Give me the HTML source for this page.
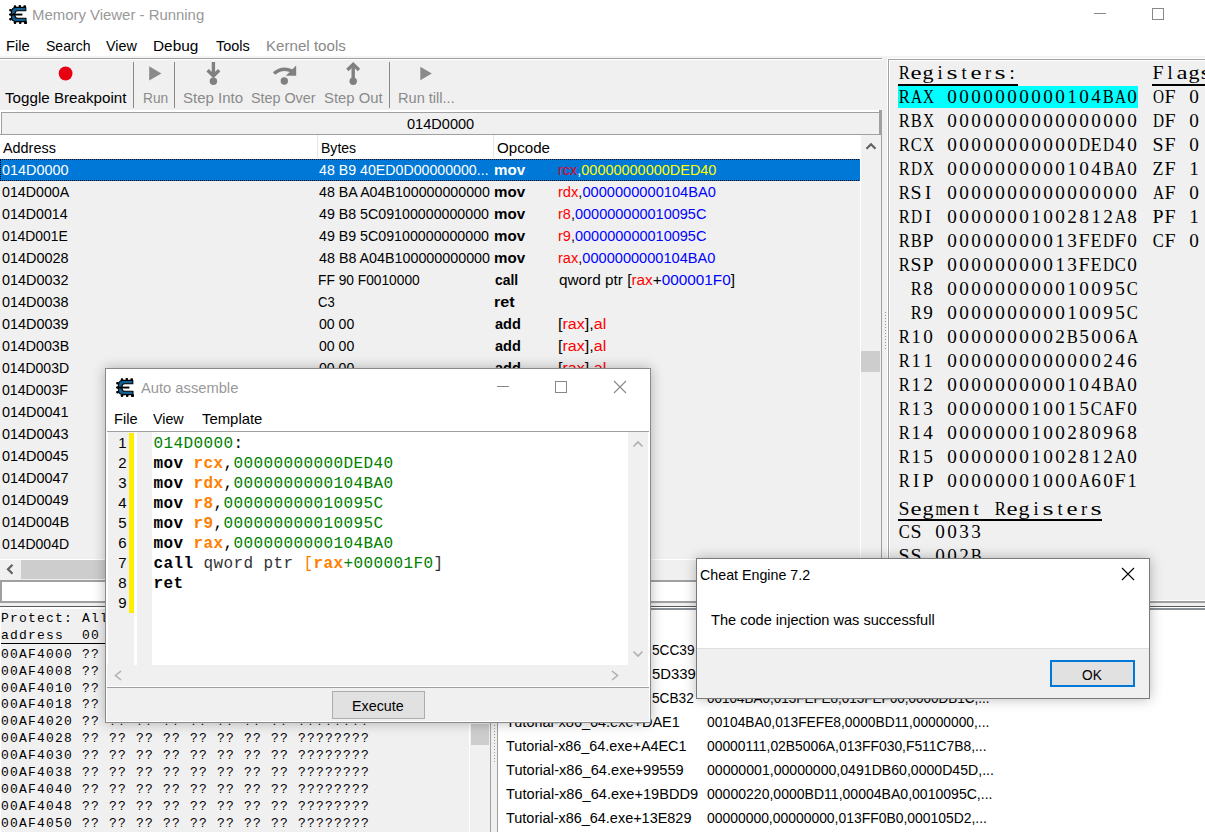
<!DOCTYPE html><html><head><meta charset="utf-8"><style>
html,body{margin:0;padding:0;}
body{width:1205px;height:832px;overflow:hidden;position:relative;background:#fff;}
div{box-sizing:border-box;}
.cl{position:absolute;white-space:nowrap;color:#000;}
.cl i{display:inline-block;text-align:center;font-style:normal;}
</style></head><body>
<svg style="position:absolute;left:8.8px;top:4.8px" width="18" height="19" viewBox="0 0 18 19">
<g fill="#000">
<rect x="4.8" y="0.2" width="2.4" height="2.6" rx="0.8"/><rect x="9.6" y="0" width="2.4" height="2.6" rx="0.8"/><rect x="14.4" y="0.2" width="2.6" height="2.6" rx="0.8"/>
<rect x="4.8" y="16.4" width="2.4" height="2.6" rx="0.8"/><rect x="10" y="16.4" width="2.4" height="2.6" rx="0.8"/><rect x="15" y="16.2" width="3" height="2.8" rx="0.8"/>
<rect x="0.2" y="4" width="2.6" height="2.4" rx="0.8"/><rect x="0" y="8.4" width="2.6" height="2.2" rx="0.8"/><rect x="0.2" y="13" width="2.6" height="2.4" rx="0.8"/>
</g>
<path d="M16.8 2.4 H7.4 Q2.4 2.4 2.4 7.4 V11.8 Q2.4 16.6 7.4 16.6 H17 V13.2 H8.8 Q6 13.2 6 10.4 V8.6 Q6 5.8 8.8 5.8 H16.8 Z" fill="#135f94" stroke="#000" stroke-width="1.1" stroke-linejoin="round"/>
<rect x="1" y="8.6" width="12.4" height="1.9" fill="#000"/>
</svg>
<div style="position:absolute;left:32.41px;top:7.10px;font:normal 15px/15px 'Liberation Sans', sans-serif;color:#999999;white-space:pre;transform:scaleX(0.9948);transform-origin:0 0;">Memory Viewer - Running</div>
<div style="position:absolute;left:1094px;top:13px;width:12px;height:1px;background:#888;"></div>
<div style="position:absolute;left:1152px;top:8px;width:12px;height:12px;background:transparent;border:1px solid #888;"></div>
<div style="position:absolute;left:6.32px;top:38.20px;font:normal 15px/15px 'Liberation Sans', sans-serif;color:#000;white-space:pre;transform:scaleX(0.9826);transform-origin:0 0;">File</div>
<div style="position:absolute;left:45.56px;top:38.20px;font:normal 15px/15px 'Liberation Sans', sans-serif;color:#000;white-space:pre;transform:scaleX(0.9370);transform-origin:0 0;">Search</div>
<div style="position:absolute;left:106.20px;top:38.20px;font:normal 15px/15px 'Liberation Sans', sans-serif;color:#000;white-space:pre;transform:scaleX(0.9576);transform-origin:0 0;">View</div>
<div style="position:absolute;left:153.37px;top:38.20px;font:normal 15px/15px 'Liberation Sans', sans-serif;color:#000;white-space:pre;transform:scaleX(1.0256);transform-origin:0 0;">Debug</div>
<div style="position:absolute;left:215.80px;top:38.20px;font:normal 15px/15px 'Liberation Sans', sans-serif;color:#000;white-space:pre;transform:scaleX(0.9657);transform-origin:0 0;">Tools</div>
<div style="position:absolute;left:265.59px;top:38.20px;font:normal 15px/15px 'Liberation Sans', sans-serif;color:#8a8a8a;white-space:pre;transform:scaleX(1.0077);transform-origin:0 0;">Kernel tools</div>
<div style="position:absolute;left:0px;top:56px;width:1205px;height:2px;background:#f4f4f4;"></div>
<div style="position:absolute;left:0px;top:58px;width:882px;height:1px;background:#a0a0a0;"></div>
<div style="position:absolute;left:0px;top:59px;width:882px;height:1px;background:#ffffff;"></div>
<div style="position:absolute;left:882px;top:58px;width:6px;height:544px;background:#f0f0f0;"></div>
<div style="position:absolute;left:0px;top:60px;width:882px;height:50px;background:#f0f0f0;"></div>
<svg style="position:absolute;left:0;top:59px" width="881" height="52" shape-rendering="auto"><circle cx="65.6" cy="14.5" r="6.9" fill="#e60012"/><rect x="133" y="3" width="1" height="46" fill="#888"/><rect x="174" y="3" width="1" height="46" fill="#888"/><rect x="389" y="3" width="1" height="46" fill="#888"/><path d="M149.2 7.3 L161.4 14.4 L149.2 21.5 Z" fill="#8a8a8a"/><path d="M420.3 7.8 L431.8 14.5 L420.3 21.2 Z" fill="#8a8a8a"/><g stroke="#808080" stroke-width="3.4" fill="none" stroke-linejoin="miter"><path d="M213.4 3 V16.5"/><path d="M207.6 11.3 L213.4 16.8 L219.2 11.3"/></g><circle cx="213.4" cy="22.3" r="3.7" fill="#808080"/><g stroke="#808080" stroke-width="3.4" fill="none"><path d="M274 14.5 Q282 7.5 292 12"/></g><path d="M285.8 16.8 L296.2 16.8 L296.2 6.4 Z" fill="#808080"/><circle cx="284.3" cy="22" r="3.7" fill="#808080"/><g stroke="#808080" stroke-width="3.4" fill="none"><path d="M353.2 6.5 V19"/><path d="M347.4 11 L353.2 5.3 L359 11"/></g><circle cx="353.2" cy="22.3" r="3.7" fill="#808080"/></svg>
<div style="position:absolute;left:4.60px;top:90.30px;font:normal 15px/15px 'Liberation Sans', sans-serif;color:#000;white-space:pre;transform:scaleX(1.0117);transform-origin:0 0;">Toggle Breakpoint</div>
<div style="position:absolute;left:142.68px;top:89.70px;font:normal 15px/15px 'Liberation Sans', sans-serif;color:#8a8a8a;white-space:pre;transform:scaleX(0.9154);transform-origin:0 0;">Run</div>
<div style="position:absolute;left:183.40px;top:89.70px;font:normal 15px/15px 'Liberation Sans', sans-serif;color:#8a8a8a;white-space:pre;transform:scaleX(1.0017);transform-origin:0 0;">Step Into</div>
<div style="position:absolute;left:251.45px;top:89.70px;font:normal 15px/15px 'Liberation Sans', sans-serif;color:#8a8a8a;white-space:pre;transform:scaleX(0.9537);transform-origin:0 0;">Step Over</div>
<div style="position:absolute;left:324.31px;top:89.70px;font:normal 15px/15px 'Liberation Sans', sans-serif;color:#8a8a8a;white-space:pre;transform:scaleX(0.9897);transform-origin:0 0;">Step Out</div>
<div style="position:absolute;left:398.33px;top:89.70px;font:normal 15px/15px 'Liberation Sans', sans-serif;color:#8a8a8a;white-space:pre;transform:scaleX(0.9714);transform-origin:0 0;">Run till...</div>
<div style="position:absolute;left:1px;top:112px;width:880px;height:22px;background:#f0f0f0;border-top:1px solid #a0a0a0;border-left:1px solid #a0a0a0;border-right:2px solid #a0a0a0;"></div>
<div style="position:absolute;left:0px;top:134px;width:881px;height:1px;background:#a0a0a0;"></div>
<div style="position:absolute;left:879px;top:110px;width:2px;height:3px;background:#a0a0a0;"></div>
<div style="position:absolute;left:407.00px;top:116.18px;font:normal 15.5px/15.5px 'Liberation Sans', sans-serif;color:#000;white-space:pre;transform:scaleX(0.9394);transform-origin:0 0;">014D0000</div>
<div style="position:absolute;left:0px;top:135px;width:861px;height:24px;background:#ffffff;"></div>
<div style="position:absolute;left:317px;top:135px;width:1px;height:23px;background:#e5e5e5;"></div>
<div style="position:absolute;left:493px;top:135px;width:1px;height:23px;background:#e5e5e5;"></div>
<div style="position:absolute;left:3.10px;top:140.30px;font:normal 15px/15px 'Liberation Sans', sans-serif;color:#000;white-space:pre;transform:scaleX(0.9600);transform-origin:0 0;">Address</div>
<div style="position:absolute;left:320.96px;top:140.30px;font:normal 15px/15px 'Liberation Sans', sans-serif;color:#000;white-space:pre;transform:scaleX(0.9361);transform-origin:0 0;">Bytes</div>
<div style="position:absolute;left:497.40px;top:140.30px;font:normal 15px/15px 'Liberation Sans', sans-serif;color:#000;white-space:pre;transform:scaleX(1.0077);transform-origin:0 0;">Opcode</div>
<div style="position:absolute;left:0px;top:159px;width:861px;height:400px;background:#f0f0f0;"></div>
<div style="position:absolute;left:0px;top:159px;width:861px;height:22px;background:#0078d7;border-top:1px dotted #000;border-bottom:1px dotted #000;border-left:1px dotted #000;"></div>
<div style="position:absolute;left:1.80px;top:161.98px;font:normal 15.5px/15.5px 'Liberation Sans', sans-serif;color:#fff;white-space:pre;transform:scaleX(0.9310);transform-origin:0 0;">014D0000</div>
<div style="position:absolute;left:319.30px;top:161.98px;font:normal 15.5px/15.5px 'Liberation Sans', sans-serif;color:#fff;white-space:pre;transform:scaleX(0.9152);transform-origin:0 0;">48 B9 40ED0D00000000...</div>
<div style="position:absolute;left:494.39px;top:162.40px;font:bold 15px/15px 'Liberation Sans', sans-serif;color:#fff;white-space:pre;transform:scaleX(1.0067);transform-origin:0 0;">mov</div>
<div style="position:absolute;left:557.87px;top:161.98px;font:normal 15.5px/15.5px 'Liberation Sans', sans-serif;color:#fff;white-space:pre;transform:scaleX(0.9331);transform-origin:0 0;"><span style="color:#e0001a">rcx</span><span style="color:#fff">,</span><span style="color:#ffff00">00000000000DED40</span></div>
<div style="position:absolute;left:1.80px;top:183.98px;font:normal 15.5px/15.5px 'Liberation Sans', sans-serif;color:#000;white-space:pre;transform:scaleX(0.9176);transform-origin:0 0;">014D000A</div>
<div style="position:absolute;left:319.30px;top:183.98px;font:normal 15.5px/15.5px 'Liberation Sans', sans-serif;color:#000;white-space:pre;transform:scaleX(0.9177);transform-origin:0 0;">48 BA A04B100000000000</div>
<div style="position:absolute;left:494.39px;top:184.40px;font:bold 15px/15px 'Liberation Sans', sans-serif;color:#000;white-space:pre;transform:scaleX(1.0067);transform-origin:0 0;">mov</div>
<div style="position:absolute;left:557.86px;top:183.98px;font:normal 15.5px/15.5px 'Liberation Sans', sans-serif;color:#000;white-space:pre;transform:scaleX(0.9440);transform-origin:0 0;"><span style="color:#ff0000">rdx</span><span style="color:#000">,</span><span style="color:#0000ff">0000000000104BA0</span></div>
<div style="position:absolute;left:1.80px;top:205.98px;font:normal 15.5px/15.5px 'Liberation Sans', sans-serif;color:#000;white-space:pre;transform:scaleX(0.9181);transform-origin:0 0;">014D0014</div>
<div style="position:absolute;left:319.30px;top:205.98px;font:normal 15.5px/15.5px 'Liberation Sans', sans-serif;color:#000;white-space:pre;transform:scaleX(0.9173);transform-origin:0 0;">49 B8 5C09100000000000</div>
<div style="position:absolute;left:494.39px;top:206.40px;font:bold 15px/15px 'Liberation Sans', sans-serif;color:#000;white-space:pre;transform:scaleX(1.0067);transform-origin:0 0;">mov</div>
<div style="position:absolute;left:557.86px;top:205.98px;font:normal 15.5px/15.5px 'Liberation Sans', sans-serif;color:#000;white-space:pre;transform:scaleX(0.9357);transform-origin:0 0;"><span style="color:#ff0000">r8</span><span style="color:#000">,</span><span style="color:#0000ff">000000000010095C</span></div>
<div style="position:absolute;left:1.80px;top:227.98px;font:normal 15.5px/15.5px 'Liberation Sans', sans-serif;color:#000;white-space:pre;transform:scaleX(0.8973);transform-origin:0 0;">014D001E</div>
<div style="position:absolute;left:319.30px;top:227.98px;font:normal 15.5px/15.5px 'Liberation Sans', sans-serif;color:#000;white-space:pre;transform:scaleX(0.9173);transform-origin:0 0;">49 B9 5C09100000000000</div>
<div style="position:absolute;left:494.39px;top:228.40px;font:bold 15px/15px 'Liberation Sans', sans-serif;color:#000;white-space:pre;transform:scaleX(1.0067);transform-origin:0 0;">mov</div>
<div style="position:absolute;left:557.86px;top:227.98px;font:normal 15.5px/15.5px 'Liberation Sans', sans-serif;color:#000;white-space:pre;transform:scaleX(0.9357);transform-origin:0 0;"><span style="color:#ff0000">r9</span><span style="color:#000">,</span><span style="color:#0000ff">000000000010095C</span></div>
<div style="position:absolute;left:1.80px;top:249.98px;font:normal 15.5px/15.5px 'Liberation Sans', sans-serif;color:#000;white-space:pre;transform:scaleX(0.9310);transform-origin:0 0;">014D0028</div>
<div style="position:absolute;left:319.30px;top:249.98px;font:normal 15.5px/15.5px 'Liberation Sans', sans-serif;color:#000;white-space:pre;transform:scaleX(0.9227);transform-origin:0 0;">48 B8 A04B100000000000</div>
<div style="position:absolute;left:494.39px;top:250.40px;font:bold 15px/15px 'Liberation Sans', sans-serif;color:#000;white-space:pre;transform:scaleX(1.0067);transform-origin:0 0;">mov</div>
<div style="position:absolute;left:557.86px;top:249.98px;font:normal 15.5px/15.5px 'Liberation Sans', sans-serif;color:#000;white-space:pre;transform:scaleX(0.9410);transform-origin:0 0;"><span style="color:#ff0000">rax</span><span style="color:#000">,</span><span style="color:#0000ff">0000000000104BA0</span></div>
<div style="position:absolute;left:1.80px;top:271.98px;font:normal 15.5px/15.5px 'Liberation Sans', sans-serif;color:#000;white-space:pre;transform:scaleX(0.9310);transform-origin:0 0;">014D0032</div>
<div style="position:absolute;left:318.41px;top:271.98px;font:normal 15.5px/15.5px 'Liberation Sans', sans-serif;color:#000;white-space:pre;transform:scaleX(0.8876);transform-origin:0 0;">FF 90 F0010000</div>
<div style="position:absolute;left:495.40px;top:272.40px;font:bold 15px/15px 'Liberation Sans', sans-serif;color:#000;white-space:pre;transform:scaleX(0.9250);transform-origin:0 0;">call</div>
<div style="position:absolute;left:558.80px;top:271.98px;font:normal 15.5px/15.5px 'Liberation Sans', sans-serif;color:#000;white-space:pre;transform:scaleX(0.9887);transform-origin:0 0;"><span style="color:#000">qword ptr </span><span style="color:#000">[</span><span style="color:#ff0000">rax</span><span style="color:#000">+</span><span style="color:#0000ff">000001F0</span><span style="color:#000">]</span></div>
<div style="position:absolute;left:1.80px;top:293.98px;font:normal 15.5px/15.5px 'Liberation Sans', sans-serif;color:#000;white-space:pre;transform:scaleX(0.9310);transform-origin:0 0;">014D0038</div>
<div style="position:absolute;left:318.46px;top:293.98px;font:normal 15.5px/15.5px 'Liberation Sans', sans-serif;color:#000;white-space:pre;transform:scaleX(0.8421);transform-origin:0 0;">C3</div>
<div style="position:absolute;left:494.32px;top:294.40px;font:bold 15px/15px 'Liberation Sans', sans-serif;color:#000;white-space:pre;transform:scaleX(1.0778);transform-origin:0 0;">ret</div>
<div style="position:absolute;left:1.80px;top:315.98px;font:normal 15.5px/15.5px 'Liberation Sans', sans-serif;color:#000;white-space:pre;transform:scaleX(0.9310);transform-origin:0 0;">014D0039</div>
<div style="position:absolute;left:319.30px;top:315.98px;font:normal 15.5px/15.5px 'Liberation Sans', sans-serif;color:#000;white-space:pre;transform:scaleX(0.9077);transform-origin:0 0;">00 00</div>
<div style="position:absolute;left:495.40px;top:316.40px;font:bold 15px/15px 'Liberation Sans', sans-serif;color:#000;white-space:pre;transform:scaleX(0.9692);transform-origin:0 0;">add</div>
<div style="position:absolute;left:557.76px;top:315.98px;font:normal 15.5px/15.5px 'Liberation Sans', sans-serif;color:#000;white-space:pre;transform:scaleX(1.0356);transform-origin:0 0;"><span style="color:#000">[</span><span style="color:#ff0000">rax</span><span style="color:#000">]</span><span style="color:#000">,</span><span style="color:#ff0000">al</span></div>
<div style="position:absolute;left:1.80px;top:337.98px;font:normal 15.5px/15.5px 'Liberation Sans', sans-serif;color:#000;white-space:pre;transform:scaleX(0.9178);transform-origin:0 0;">014D003B</div>
<div style="position:absolute;left:319.30px;top:337.98px;font:normal 15.5px/15.5px 'Liberation Sans', sans-serif;color:#000;white-space:pre;transform:scaleX(0.9077);transform-origin:0 0;">00 00</div>
<div style="position:absolute;left:495.40px;top:338.40px;font:bold 15px/15px 'Liberation Sans', sans-serif;color:#000;white-space:pre;transform:scaleX(0.9692);transform-origin:0 0;">add</div>
<div style="position:absolute;left:557.76px;top:337.98px;font:normal 15.5px/15.5px 'Liberation Sans', sans-serif;color:#000;white-space:pre;transform:scaleX(1.0356);transform-origin:0 0;"><span style="color:#000">[</span><span style="color:#ff0000">rax</span><span style="color:#000">]</span><span style="color:#000">,</span><span style="color:#ff0000">al</span></div>
<div style="position:absolute;left:1.80px;top:359.98px;font:normal 15.5px/15.5px 'Liberation Sans', sans-serif;color:#000;white-space:pre;transform:scaleX(0.9054);transform-origin:0 0;">014D003D</div>
<div style="position:absolute;left:319.30px;top:359.98px;font:normal 15.5px/15.5px 'Liberation Sans', sans-serif;color:#000;white-space:pre;transform:scaleX(0.9077);transform-origin:0 0;">00 00</div>
<div style="position:absolute;left:495.40px;top:360.40px;font:bold 15px/15px 'Liberation Sans', sans-serif;color:#000;white-space:pre;transform:scaleX(0.9692);transform-origin:0 0;">add</div>
<div style="position:absolute;left:557.76px;top:359.98px;font:normal 15.5px/15.5px 'Liberation Sans', sans-serif;color:#000;white-space:pre;transform:scaleX(1.0356);transform-origin:0 0;"><span style="color:#000">[</span><span style="color:#ff0000">rax</span><span style="color:#000">]</span><span style="color:#000">,</span><span style="color:#ff0000">al</span></div>
<div style="position:absolute;left:1.80px;top:381.98px;font:normal 15.5px/15.5px 'Liberation Sans', sans-serif;color:#000;white-space:pre;transform:scaleX(0.9097);transform-origin:0 0;">014D003F</div>
<div style="position:absolute;left:319.30px;top:381.98px;font:normal 15.5px/15.5px 'Liberation Sans', sans-serif;color:#000;white-space:pre;transform:scaleX(0.9077);transform-origin:0 0;">00 00</div>
<div style="position:absolute;left:495.40px;top:382.40px;font:bold 15px/15px 'Liberation Sans', sans-serif;color:#000;white-space:pre;transform:scaleX(0.9692);transform-origin:0 0;">add</div>
<div style="position:absolute;left:557.76px;top:381.98px;font:normal 15.5px/15.5px 'Liberation Sans', sans-serif;color:#000;white-space:pre;transform:scaleX(1.0356);transform-origin:0 0;"><span style="color:#000">[</span><span style="color:#ff0000">rax</span><span style="color:#000">]</span><span style="color:#000">,</span><span style="color:#ff0000">al</span></div>
<div style="position:absolute;left:1.80px;top:403.98px;font:normal 15.5px/15.5px 'Liberation Sans', sans-serif;color:#000;white-space:pre;transform:scaleX(0.9310);transform-origin:0 0;">014D0041</div>
<div style="position:absolute;left:319.30px;top:403.98px;font:normal 15.5px/15.5px 'Liberation Sans', sans-serif;color:#000;white-space:pre;transform:scaleX(0.9077);transform-origin:0 0;">00 00</div>
<div style="position:absolute;left:495.40px;top:404.40px;font:bold 15px/15px 'Liberation Sans', sans-serif;color:#000;white-space:pre;transform:scaleX(0.9692);transform-origin:0 0;">add</div>
<div style="position:absolute;left:557.76px;top:403.98px;font:normal 15.5px/15.5px 'Liberation Sans', sans-serif;color:#000;white-space:pre;transform:scaleX(1.0356);transform-origin:0 0;"><span style="color:#000">[</span><span style="color:#ff0000">rax</span><span style="color:#000">]</span><span style="color:#000">,</span><span style="color:#ff0000">al</span></div>
<div style="position:absolute;left:1.80px;top:425.98px;font:normal 15.5px/15.5px 'Liberation Sans', sans-serif;color:#000;white-space:pre;transform:scaleX(0.9310);transform-origin:0 0;">014D0043</div>
<div style="position:absolute;left:319.30px;top:425.98px;font:normal 15.5px/15.5px 'Liberation Sans', sans-serif;color:#000;white-space:pre;transform:scaleX(0.9077);transform-origin:0 0;">00 00</div>
<div style="position:absolute;left:495.40px;top:426.40px;font:bold 15px/15px 'Liberation Sans', sans-serif;color:#000;white-space:pre;transform:scaleX(0.9692);transform-origin:0 0;">add</div>
<div style="position:absolute;left:557.76px;top:425.98px;font:normal 15.5px/15.5px 'Liberation Sans', sans-serif;color:#000;white-space:pre;transform:scaleX(1.0356);transform-origin:0 0;"><span style="color:#000">[</span><span style="color:#ff0000">rax</span><span style="color:#000">]</span><span style="color:#000">,</span><span style="color:#ff0000">al</span></div>
<div style="position:absolute;left:1.80px;top:447.98px;font:normal 15.5px/15.5px 'Liberation Sans', sans-serif;color:#000;white-space:pre;transform:scaleX(0.9310);transform-origin:0 0;">014D0045</div>
<div style="position:absolute;left:319.30px;top:447.98px;font:normal 15.5px/15.5px 'Liberation Sans', sans-serif;color:#000;white-space:pre;transform:scaleX(0.9077);transform-origin:0 0;">00 00</div>
<div style="position:absolute;left:495.40px;top:448.40px;font:bold 15px/15px 'Liberation Sans', sans-serif;color:#000;white-space:pre;transform:scaleX(0.9692);transform-origin:0 0;">add</div>
<div style="position:absolute;left:557.76px;top:447.98px;font:normal 15.5px/15.5px 'Liberation Sans', sans-serif;color:#000;white-space:pre;transform:scaleX(1.0356);transform-origin:0 0;"><span style="color:#000">[</span><span style="color:#ff0000">rax</span><span style="color:#000">]</span><span style="color:#000">,</span><span style="color:#ff0000">al</span></div>
<div style="position:absolute;left:1.80px;top:469.98px;font:normal 15.5px/15.5px 'Liberation Sans', sans-serif;color:#000;white-space:pre;transform:scaleX(0.9310);transform-origin:0 0;">014D0047</div>
<div style="position:absolute;left:319.30px;top:469.98px;font:normal 15.5px/15.5px 'Liberation Sans', sans-serif;color:#000;white-space:pre;transform:scaleX(0.9077);transform-origin:0 0;">00 00</div>
<div style="position:absolute;left:495.40px;top:470.40px;font:bold 15px/15px 'Liberation Sans', sans-serif;color:#000;white-space:pre;transform:scaleX(0.9692);transform-origin:0 0;">add</div>
<div style="position:absolute;left:557.76px;top:469.98px;font:normal 15.5px/15.5px 'Liberation Sans', sans-serif;color:#000;white-space:pre;transform:scaleX(1.0356);transform-origin:0 0;"><span style="color:#000">[</span><span style="color:#ff0000">rax</span><span style="color:#000">]</span><span style="color:#000">,</span><span style="color:#ff0000">al</span></div>
<div style="position:absolute;left:1.80px;top:491.98px;font:normal 15.5px/15.5px 'Liberation Sans', sans-serif;color:#000;white-space:pre;transform:scaleX(0.9310);transform-origin:0 0;">014D0049</div>
<div style="position:absolute;left:319.30px;top:491.98px;font:normal 15.5px/15.5px 'Liberation Sans', sans-serif;color:#000;white-space:pre;transform:scaleX(0.9077);transform-origin:0 0;">00 00</div>
<div style="position:absolute;left:495.40px;top:492.40px;font:bold 15px/15px 'Liberation Sans', sans-serif;color:#000;white-space:pre;transform:scaleX(0.9692);transform-origin:0 0;">add</div>
<div style="position:absolute;left:557.76px;top:491.98px;font:normal 15.5px/15.5px 'Liberation Sans', sans-serif;color:#000;white-space:pre;transform:scaleX(1.0356);transform-origin:0 0;"><span style="color:#000">[</span><span style="color:#ff0000">rax</span><span style="color:#000">]</span><span style="color:#000">,</span><span style="color:#ff0000">al</span></div>
<div style="position:absolute;left:1.80px;top:513.98px;font:normal 15.5px/15.5px 'Liberation Sans', sans-serif;color:#000;white-space:pre;transform:scaleX(0.9178);transform-origin:0 0;">014D004B</div>
<div style="position:absolute;left:319.30px;top:513.98px;font:normal 15.5px/15.5px 'Liberation Sans', sans-serif;color:#000;white-space:pre;transform:scaleX(0.9077);transform-origin:0 0;">00 00</div>
<div style="position:absolute;left:495.40px;top:514.40px;font:bold 15px/15px 'Liberation Sans', sans-serif;color:#000;white-space:pre;transform:scaleX(0.9692);transform-origin:0 0;">add</div>
<div style="position:absolute;left:557.76px;top:513.98px;font:normal 15.5px/15.5px 'Liberation Sans', sans-serif;color:#000;white-space:pre;transform:scaleX(1.0356);transform-origin:0 0;"><span style="color:#000">[</span><span style="color:#ff0000">rax</span><span style="color:#000">]</span><span style="color:#000">,</span><span style="color:#ff0000">al</span></div>
<div style="position:absolute;left:1.80px;top:535.98px;font:normal 15.5px/15.5px 'Liberation Sans', sans-serif;color:#000;white-space:pre;transform:scaleX(0.9054);transform-origin:0 0;">014D004D</div>
<div style="position:absolute;left:319.30px;top:535.98px;font:normal 15.5px/15.5px 'Liberation Sans', sans-serif;color:#000;white-space:pre;transform:scaleX(0.9077);transform-origin:0 0;">00 00</div>
<div style="position:absolute;left:495.40px;top:536.40px;font:bold 15px/15px 'Liberation Sans', sans-serif;color:#000;white-space:pre;transform:scaleX(0.9692);transform-origin:0 0;">add</div>
<div style="position:absolute;left:557.76px;top:535.98px;font:normal 15.5px/15.5px 'Liberation Sans', sans-serif;color:#000;white-space:pre;transform:scaleX(1.0356);transform-origin:0 0;"><span style="color:#000">[</span><span style="color:#ff0000">rax</span><span style="color:#000">]</span><span style="color:#000">,</span><span style="color:#ff0000">al</span></div>
<div style="position:absolute;left:861px;top:135px;width:20px;height:424px;background:#f0f0f0;"></div>
<svg style="position:absolute;left:861px;top:135px" width="20" height="30"><path d="M5.5 13.8 L10 9.3 L14.5 13.8" stroke="#606060" stroke-width="2.2" fill="none"/></svg>
<div style="position:absolute;left:861px;top:351px;width:19px;height:21px;background:#cdcdcd;"></div>
<div style="position:absolute;left:881px;top:110px;width:1px;height:470px;background:#a0a0a0;"></div>
<div style="position:absolute;left:860px;top:135px;width:1px;height:424px;background:#ffffff;"></div>
<div style="position:absolute;left:885px;top:312px;width:1px;height:1px;background:#9a9a9a;"></div>
<div style="position:absolute;left:885px;top:315px;width:1px;height:1px;background:#9a9a9a;"></div>
<div style="position:absolute;left:885px;top:318px;width:1px;height:1px;background:#9a9a9a;"></div>
<div style="position:absolute;left:885px;top:321px;width:1px;height:1px;background:#9a9a9a;"></div>
<div style="position:absolute;left:885px;top:324px;width:1px;height:1px;background:#9a9a9a;"></div>
<div style="position:absolute;left:885px;top:327px;width:1px;height:1px;background:#9a9a9a;"></div>
<div style="position:absolute;left:885px;top:330px;width:1px;height:1px;background:#9a9a9a;"></div>
<div style="position:absolute;left:885px;top:333px;width:1px;height:1px;background:#9a9a9a;"></div>
<div style="position:absolute;left:885px;top:336px;width:1px;height:1px;background:#9a9a9a;"></div>
<div style="position:absolute;left:885px;top:339px;width:1px;height:1px;background:#9a9a9a;"></div>
<div style="position:absolute;left:885px;top:342px;width:1px;height:1px;background:#9a9a9a;"></div>
<div style="position:absolute;left:885px;top:345px;width:1px;height:1px;background:#9a9a9a;"></div>
<div style="position:absolute;left:885px;top:348px;width:1px;height:1px;background:#9a9a9a;"></div>
<div style="position:absolute;left:0px;top:559px;width:861px;height:21px;background:#f0f0f0;"></div>
<div style="position:absolute;left:21px;top:560px;width:580px;height:19px;background:#cdcdcd;"></div>
<svg style="position:absolute;left:0;top:559px" width="21" height="21"><path d="M12.5 5.8 L8 10.3 L12.5 14.8" stroke="#606060" stroke-width="2.2" fill="none"/></svg>
<div style="position:absolute;left:0px;top:559px;width:861px;height:1px;background:#ffffff;"></div>
<div style="position:absolute;left:861px;top:559px;width:20px;height:21px;background:#f0f0f0;"></div>
<div style="position:absolute;left:0px;top:580px;width:881px;height:21px;background:#ffffff;border-top:2px solid #a0a0a0;border-left:2px solid #a0a0a0;"></div>
<div style="position:absolute;left:887px;top:58px;width:318px;height:542px;background:#f0f0f0;border-left:1px solid #fff;border-top:1px solid #fff;"></div>
<div style="position:absolute;left:888px;top:59px;width:317px;height:541px;background:transparent;border-left:1px solid #a0a0a0;border-top:1px solid #a0a0a0;"></div>
<div style="position:absolute;left:889px;top:60px;width:316px;height:540px;background:transparent;border-left:1px solid #fff;border-top:1px solid #fff;"></div>
<div class="cl" style="left:898px;top:63.51px;font:18.5px/18.5px 'Liberation Serif', serif;"><i style="width:12px;transform:scaleX(0.895);">R</i><i style="width:12px;transform:scaleX(1.345);">e</i><i style="width:12px;transform:scaleX(1.194);">g</i><i style="width:12px;">i</i><i style="width:12px;transform:scaleX(1.534);">s</i><i style="width:12px;">t</i><i style="width:12px;transform:scaleX(1.345);">e</i><i style="width:12px;">r</i><i style="width:12px;transform:scaleX(1.534);">s</i><i style="width:12px;">:</i></div>
<div style="position:absolute;left:898px;top:84px;width:120px;height:2px;background:#000;"></div>
<div class="cl" style="left:1152px;top:63.51px;font:18.5px/18.5px 'Liberation Serif', serif;"><i style="width:12px;transform:scaleX(1.073);">F</i><i style="width:12px;">l</i><i style="width:12px;transform:scaleX(1.345);">a</i><i style="width:12px;transform:scaleX(1.194);">g</i><i style="width:12px;transform:scaleX(1.534);">s</i><i style="width:12px;">:</i></div>
<div style="position:absolute;left:1152px;top:84px;width:60px;height:2px;background:#000;"></div>
<div style="position:absolute;left:898px;top:86px;width:240px;height:22px;background:#00ffff;"></div>
<div class="cl" style="left:898px;top:88.11px;font:18.5px/18.5px 'Liberation Serif', serif;"><i style="width:12px;transform:scaleX(0.895);">R</i><i style="width:12px;transform:scaleX(0.826);">A</i><i style="width:12px;transform:scaleX(0.826);">X</i><i style="width:12px;">&nbsp;</i><i style="width:12px;transform:scaleX(1.038);">0</i><i style="width:12px;transform:scaleX(1.038);">0</i><i style="width:12px;transform:scaleX(1.038);">0</i><i style="width:12px;transform:scaleX(1.038);">0</i><i style="width:12px;transform:scaleX(1.038);">0</i><i style="width:12px;transform:scaleX(1.038);">0</i><i style="width:12px;transform:scaleX(1.038);">0</i><i style="width:12px;transform:scaleX(1.038);">0</i><i style="width:12px;transform:scaleX(1.038);">0</i><i style="width:12px;transform:scaleX(1.038);">0</i><i style="width:12px;">1</i><i style="width:12px;transform:scaleX(1.038);">0</i><i style="width:12px;transform:scaleX(1.038);">4</i><i style="width:12px;transform:scaleX(0.895);">B</i><i style="width:12px;transform:scaleX(0.826);">A</i><i style="width:12px;transform:scaleX(1.038);">0</i></div>
<div class="cl" style="left:898px;top:112.11px;font:18.5px/18.5px 'Liberation Serif', serif;"><i style="width:12px;transform:scaleX(0.895);">R</i><i style="width:12px;transform:scaleX(0.895);">B</i><i style="width:12px;transform:scaleX(0.826);">X</i><i style="width:12px;">&nbsp;</i><i style="width:12px;transform:scaleX(1.038);">0</i><i style="width:12px;transform:scaleX(1.038);">0</i><i style="width:12px;transform:scaleX(1.038);">0</i><i style="width:12px;transform:scaleX(1.038);">0</i><i style="width:12px;transform:scaleX(1.038);">0</i><i style="width:12px;transform:scaleX(1.038);">0</i><i style="width:12px;transform:scaleX(1.038);">0</i><i style="width:12px;transform:scaleX(1.038);">0</i><i style="width:12px;transform:scaleX(1.038);">0</i><i style="width:12px;transform:scaleX(1.038);">0</i><i style="width:12px;transform:scaleX(1.038);">0</i><i style="width:12px;transform:scaleX(1.038);">0</i><i style="width:12px;transform:scaleX(1.038);">0</i><i style="width:12px;transform:scaleX(1.038);">0</i><i style="width:12px;transform:scaleX(1.038);">0</i><i style="width:12px;transform:scaleX(1.038);">0</i></div>
<div class="cl" style="left:898px;top:136.11px;font:18.5px/18.5px 'Liberation Serif', serif;"><i style="width:12px;transform:scaleX(0.895);">R</i><i style="width:12px;transform:scaleX(0.895);">C</i><i style="width:12px;transform:scaleX(0.826);">X</i><i style="width:12px;">&nbsp;</i><i style="width:12px;transform:scaleX(1.038);">0</i><i style="width:12px;transform:scaleX(1.038);">0</i><i style="width:12px;transform:scaleX(1.038);">0</i><i style="width:12px;transform:scaleX(1.038);">0</i><i style="width:12px;transform:scaleX(1.038);">0</i><i style="width:12px;transform:scaleX(1.038);">0</i><i style="width:12px;transform:scaleX(1.038);">0</i><i style="width:12px;transform:scaleX(1.038);">0</i><i style="width:12px;transform:scaleX(1.038);">0</i><i style="width:12px;transform:scaleX(1.038);">0</i><i style="width:12px;transform:scaleX(1.038);">0</i><i style="width:12px;transform:scaleX(0.826);">D</i><i style="width:12px;transform:scaleX(0.977);">E</i><i style="width:12px;transform:scaleX(0.826);">D</i><i style="width:12px;transform:scaleX(1.038);">4</i><i style="width:12px;transform:scaleX(1.038);">0</i></div>
<div class="cl" style="left:898px;top:160.11px;font:18.5px/18.5px 'Liberation Serif', serif;"><i style="width:12px;transform:scaleX(0.895);">R</i><i style="width:12px;transform:scaleX(0.826);">D</i><i style="width:12px;transform:scaleX(0.826);">X</i><i style="width:12px;">&nbsp;</i><i style="width:12px;transform:scaleX(1.038);">0</i><i style="width:12px;transform:scaleX(1.038);">0</i><i style="width:12px;transform:scaleX(1.038);">0</i><i style="width:12px;transform:scaleX(1.038);">0</i><i style="width:12px;transform:scaleX(1.038);">0</i><i style="width:12px;transform:scaleX(1.038);">0</i><i style="width:12px;transform:scaleX(1.038);">0</i><i style="width:12px;transform:scaleX(1.038);">0</i><i style="width:12px;transform:scaleX(1.038);">0</i><i style="width:12px;transform:scaleX(1.038);">0</i><i style="width:12px;">1</i><i style="width:12px;transform:scaleX(1.038);">0</i><i style="width:12px;transform:scaleX(1.038);">4</i><i style="width:12px;transform:scaleX(0.895);">B</i><i style="width:12px;transform:scaleX(0.826);">A</i><i style="width:12px;transform:scaleX(1.038);">0</i></div>
<div class="cl" style="left:898px;top:184.11px;font:18.5px/18.5px 'Liberation Serif', serif;"><i style="width:12px;transform:scaleX(0.895);">R</i><i style="width:12px;transform:scaleX(1.073);">S</i><i style="width:12px;">I</i><i style="width:12px;">&nbsp;</i><i style="width:12px;transform:scaleX(1.038);">0</i><i style="width:12px;transform:scaleX(1.038);">0</i><i style="width:12px;transform:scaleX(1.038);">0</i><i style="width:12px;transform:scaleX(1.038);">0</i><i style="width:12px;transform:scaleX(1.038);">0</i><i style="width:12px;transform:scaleX(1.038);">0</i><i style="width:12px;transform:scaleX(1.038);">0</i><i style="width:12px;transform:scaleX(1.038);">0</i><i style="width:12px;transform:scaleX(1.038);">0</i><i style="width:12px;transform:scaleX(1.038);">0</i><i style="width:12px;transform:scaleX(1.038);">0</i><i style="width:12px;transform:scaleX(1.038);">0</i><i style="width:12px;transform:scaleX(1.038);">0</i><i style="width:12px;transform:scaleX(1.038);">0</i><i style="width:12px;transform:scaleX(1.038);">0</i><i style="width:12px;transform:scaleX(1.038);">0</i></div>
<div class="cl" style="left:898px;top:208.11px;font:18.5px/18.5px 'Liberation Serif', serif;"><i style="width:12px;transform:scaleX(0.895);">R</i><i style="width:12px;transform:scaleX(0.826);">D</i><i style="width:12px;">I</i><i style="width:12px;">&nbsp;</i><i style="width:12px;transform:scaleX(1.038);">0</i><i style="width:12px;transform:scaleX(1.038);">0</i><i style="width:12px;transform:scaleX(1.038);">0</i><i style="width:12px;transform:scaleX(1.038);">0</i><i style="width:12px;transform:scaleX(1.038);">0</i><i style="width:12px;transform:scaleX(1.038);">0</i><i style="width:12px;transform:scaleX(1.038);">0</i><i style="width:12px;">1</i><i style="width:12px;transform:scaleX(1.038);">0</i><i style="width:12px;transform:scaleX(1.038);">0</i><i style="width:12px;transform:scaleX(1.038);">2</i><i style="width:12px;transform:scaleX(1.038);">8</i><i style="width:12px;">1</i><i style="width:12px;transform:scaleX(1.038);">2</i><i style="width:12px;transform:scaleX(0.826);">A</i><i style="width:12px;transform:scaleX(1.038);">8</i></div>
<div class="cl" style="left:898px;top:232.11px;font:18.5px/18.5px 'Liberation Serif', serif;"><i style="width:12px;transform:scaleX(0.895);">R</i><i style="width:12px;transform:scaleX(0.895);">B</i><i style="width:12px;transform:scaleX(1.073);">P</i><i style="width:12px;">&nbsp;</i><i style="width:12px;transform:scaleX(1.038);">0</i><i style="width:12px;transform:scaleX(1.038);">0</i><i style="width:12px;transform:scaleX(1.038);">0</i><i style="width:12px;transform:scaleX(1.038);">0</i><i style="width:12px;transform:scaleX(1.038);">0</i><i style="width:12px;transform:scaleX(1.038);">0</i><i style="width:12px;transform:scaleX(1.038);">0</i><i style="width:12px;transform:scaleX(1.038);">0</i><i style="width:12px;transform:scaleX(1.038);">0</i><i style="width:12px;">1</i><i style="width:12px;transform:scaleX(1.038);">3</i><i style="width:12px;transform:scaleX(1.073);">F</i><i style="width:12px;transform:scaleX(0.977);">E</i><i style="width:12px;transform:scaleX(0.826);">D</i><i style="width:12px;transform:scaleX(1.073);">F</i><i style="width:12px;transform:scaleX(1.038);">0</i></div>
<div class="cl" style="left:898px;top:256.11px;font:18.5px/18.5px 'Liberation Serif', serif;"><i style="width:12px;transform:scaleX(0.895);">R</i><i style="width:12px;transform:scaleX(1.073);">S</i><i style="width:12px;transform:scaleX(1.073);">P</i><i style="width:12px;">&nbsp;</i><i style="width:12px;transform:scaleX(1.038);">0</i><i style="width:12px;transform:scaleX(1.038);">0</i><i style="width:12px;transform:scaleX(1.038);">0</i><i style="width:12px;transform:scaleX(1.038);">0</i><i style="width:12px;transform:scaleX(1.038);">0</i><i style="width:12px;transform:scaleX(1.038);">0</i><i style="width:12px;transform:scaleX(1.038);">0</i><i style="width:12px;transform:scaleX(1.038);">0</i><i style="width:12px;transform:scaleX(1.038);">0</i><i style="width:12px;">1</i><i style="width:12px;transform:scaleX(1.038);">3</i><i style="width:12px;transform:scaleX(1.073);">F</i><i style="width:12px;transform:scaleX(0.977);">E</i><i style="width:12px;transform:scaleX(0.826);">D</i><i style="width:12px;transform:scaleX(0.895);">C</i><i style="width:12px;transform:scaleX(1.038);">0</i></div>
<div class="cl" style="left:898px;top:280.11px;font:18.5px/18.5px 'Liberation Serif', serif;"><i style="width:12px;">&nbsp;</i><i style="width:12px;transform:scaleX(0.895);">R</i><i style="width:12px;transform:scaleX(1.038);">8</i><i style="width:12px;">&nbsp;</i><i style="width:12px;transform:scaleX(1.038);">0</i><i style="width:12px;transform:scaleX(1.038);">0</i><i style="width:12px;transform:scaleX(1.038);">0</i><i style="width:12px;transform:scaleX(1.038);">0</i><i style="width:12px;transform:scaleX(1.038);">0</i><i style="width:12px;transform:scaleX(1.038);">0</i><i style="width:12px;transform:scaleX(1.038);">0</i><i style="width:12px;transform:scaleX(1.038);">0</i><i style="width:12px;transform:scaleX(1.038);">0</i><i style="width:12px;transform:scaleX(1.038);">0</i><i style="width:12px;">1</i><i style="width:12px;transform:scaleX(1.038);">0</i><i style="width:12px;transform:scaleX(1.038);">0</i><i style="width:12px;transform:scaleX(1.038);">9</i><i style="width:12px;transform:scaleX(1.038);">5</i><i style="width:12px;transform:scaleX(0.895);">C</i></div>
<div class="cl" style="left:898px;top:304.11px;font:18.5px/18.5px 'Liberation Serif', serif;"><i style="width:12px;">&nbsp;</i><i style="width:12px;transform:scaleX(0.895);">R</i><i style="width:12px;transform:scaleX(1.038);">9</i><i style="width:12px;">&nbsp;</i><i style="width:12px;transform:scaleX(1.038);">0</i><i style="width:12px;transform:scaleX(1.038);">0</i><i style="width:12px;transform:scaleX(1.038);">0</i><i style="width:12px;transform:scaleX(1.038);">0</i><i style="width:12px;transform:scaleX(1.038);">0</i><i style="width:12px;transform:scaleX(1.038);">0</i><i style="width:12px;transform:scaleX(1.038);">0</i><i style="width:12px;transform:scaleX(1.038);">0</i><i style="width:12px;transform:scaleX(1.038);">0</i><i style="width:12px;transform:scaleX(1.038);">0</i><i style="width:12px;">1</i><i style="width:12px;transform:scaleX(1.038);">0</i><i style="width:12px;transform:scaleX(1.038);">0</i><i style="width:12px;transform:scaleX(1.038);">9</i><i style="width:12px;transform:scaleX(1.038);">5</i><i style="width:12px;transform:scaleX(0.895);">C</i></div>
<div class="cl" style="left:898px;top:328.11px;font:18.5px/18.5px 'Liberation Serif', serif;"><i style="width:12px;transform:scaleX(0.895);">R</i><i style="width:12px;">1</i><i style="width:12px;transform:scaleX(1.038);">0</i><i style="width:12px;">&nbsp;</i><i style="width:12px;transform:scaleX(1.038);">0</i><i style="width:12px;transform:scaleX(1.038);">0</i><i style="width:12px;transform:scaleX(1.038);">0</i><i style="width:12px;transform:scaleX(1.038);">0</i><i style="width:12px;transform:scaleX(1.038);">0</i><i style="width:12px;transform:scaleX(1.038);">0</i><i style="width:12px;transform:scaleX(1.038);">0</i><i style="width:12px;transform:scaleX(1.038);">0</i><i style="width:12px;transform:scaleX(1.038);">0</i><i style="width:12px;transform:scaleX(1.038);">2</i><i style="width:12px;transform:scaleX(0.895);">B</i><i style="width:12px;transform:scaleX(1.038);">5</i><i style="width:12px;transform:scaleX(1.038);">0</i><i style="width:12px;transform:scaleX(1.038);">0</i><i style="width:12px;transform:scaleX(1.038);">6</i><i style="width:12px;transform:scaleX(0.826);">A</i></div>
<div class="cl" style="left:898px;top:352.11px;font:18.5px/18.5px 'Liberation Serif', serif;"><i style="width:12px;transform:scaleX(0.895);">R</i><i style="width:12px;">1</i><i style="width:12px;">1</i><i style="width:12px;">&nbsp;</i><i style="width:12px;transform:scaleX(1.038);">0</i><i style="width:12px;transform:scaleX(1.038);">0</i><i style="width:12px;transform:scaleX(1.038);">0</i><i style="width:12px;transform:scaleX(1.038);">0</i><i style="width:12px;transform:scaleX(1.038);">0</i><i style="width:12px;transform:scaleX(1.038);">0</i><i style="width:12px;transform:scaleX(1.038);">0</i><i style="width:12px;transform:scaleX(1.038);">0</i><i style="width:12px;transform:scaleX(1.038);">0</i><i style="width:12px;transform:scaleX(1.038);">0</i><i style="width:12px;transform:scaleX(1.038);">0</i><i style="width:12px;transform:scaleX(1.038);">0</i><i style="width:12px;transform:scaleX(1.038);">0</i><i style="width:12px;transform:scaleX(1.038);">2</i><i style="width:12px;transform:scaleX(1.038);">4</i><i style="width:12px;transform:scaleX(1.038);">6</i></div>
<div class="cl" style="left:898px;top:376.11px;font:18.5px/18.5px 'Liberation Serif', serif;"><i style="width:12px;transform:scaleX(0.895);">R</i><i style="width:12px;">1</i><i style="width:12px;transform:scaleX(1.038);">2</i><i style="width:12px;">&nbsp;</i><i style="width:12px;transform:scaleX(1.038);">0</i><i style="width:12px;transform:scaleX(1.038);">0</i><i style="width:12px;transform:scaleX(1.038);">0</i><i style="width:12px;transform:scaleX(1.038);">0</i><i style="width:12px;transform:scaleX(1.038);">0</i><i style="width:12px;transform:scaleX(1.038);">0</i><i style="width:12px;transform:scaleX(1.038);">0</i><i style="width:12px;transform:scaleX(1.038);">0</i><i style="width:12px;transform:scaleX(1.038);">0</i><i style="width:12px;transform:scaleX(1.038);">0</i><i style="width:12px;">1</i><i style="width:12px;transform:scaleX(1.038);">0</i><i style="width:12px;transform:scaleX(1.038);">4</i><i style="width:12px;transform:scaleX(0.895);">B</i><i style="width:12px;transform:scaleX(0.826);">A</i><i style="width:12px;transform:scaleX(1.038);">0</i></div>
<div class="cl" style="left:898px;top:400.11px;font:18.5px/18.5px 'Liberation Serif', serif;"><i style="width:12px;transform:scaleX(0.895);">R</i><i style="width:12px;">1</i><i style="width:12px;transform:scaleX(1.038);">3</i><i style="width:12px;">&nbsp;</i><i style="width:12px;transform:scaleX(1.038);">0</i><i style="width:12px;transform:scaleX(1.038);">0</i><i style="width:12px;transform:scaleX(1.038);">0</i><i style="width:12px;transform:scaleX(1.038);">0</i><i style="width:12px;transform:scaleX(1.038);">0</i><i style="width:12px;transform:scaleX(1.038);">0</i><i style="width:12px;transform:scaleX(1.038);">0</i><i style="width:12px;">1</i><i style="width:12px;transform:scaleX(1.038);">0</i><i style="width:12px;transform:scaleX(1.038);">0</i><i style="width:12px;">1</i><i style="width:12px;transform:scaleX(1.038);">5</i><i style="width:12px;transform:scaleX(0.895);">C</i><i style="width:12px;transform:scaleX(0.826);">A</i><i style="width:12px;transform:scaleX(1.073);">F</i><i style="width:12px;transform:scaleX(1.038);">0</i></div>
<div class="cl" style="left:898px;top:424.11px;font:18.5px/18.5px 'Liberation Serif', serif;"><i style="width:12px;transform:scaleX(0.895);">R</i><i style="width:12px;">1</i><i style="width:12px;transform:scaleX(1.038);">4</i><i style="width:12px;">&nbsp;</i><i style="width:12px;transform:scaleX(1.038);">0</i><i style="width:12px;transform:scaleX(1.038);">0</i><i style="width:12px;transform:scaleX(1.038);">0</i><i style="width:12px;transform:scaleX(1.038);">0</i><i style="width:12px;transform:scaleX(1.038);">0</i><i style="width:12px;transform:scaleX(1.038);">0</i><i style="width:12px;transform:scaleX(1.038);">0</i><i style="width:12px;">1</i><i style="width:12px;transform:scaleX(1.038);">0</i><i style="width:12px;transform:scaleX(1.038);">0</i><i style="width:12px;transform:scaleX(1.038);">2</i><i style="width:12px;transform:scaleX(1.038);">8</i><i style="width:12px;transform:scaleX(1.038);">0</i><i style="width:12px;transform:scaleX(1.038);">9</i><i style="width:12px;transform:scaleX(1.038);">6</i><i style="width:12px;transform:scaleX(1.038);">8</i></div>
<div class="cl" style="left:898px;top:448.11px;font:18.5px/18.5px 'Liberation Serif', serif;"><i style="width:12px;transform:scaleX(0.895);">R</i><i style="width:12px;">1</i><i style="width:12px;transform:scaleX(1.038);">5</i><i style="width:12px;">&nbsp;</i><i style="width:12px;transform:scaleX(1.038);">0</i><i style="width:12px;transform:scaleX(1.038);">0</i><i style="width:12px;transform:scaleX(1.038);">0</i><i style="width:12px;transform:scaleX(1.038);">0</i><i style="width:12px;transform:scaleX(1.038);">0</i><i style="width:12px;transform:scaleX(1.038);">0</i><i style="width:12px;transform:scaleX(1.038);">0</i><i style="width:12px;">1</i><i style="width:12px;transform:scaleX(1.038);">0</i><i style="width:12px;transform:scaleX(1.038);">0</i><i style="width:12px;transform:scaleX(1.038);">2</i><i style="width:12px;transform:scaleX(1.038);">8</i><i style="width:12px;">1</i><i style="width:12px;transform:scaleX(1.038);">2</i><i style="width:12px;transform:scaleX(0.826);">A</i><i style="width:12px;transform:scaleX(1.038);">0</i></div>
<div class="cl" style="left:898px;top:472.11px;font:18.5px/18.5px 'Liberation Serif', serif;"><i style="width:12px;transform:scaleX(0.895);">R</i><i style="width:12px;">I</i><i style="width:12px;transform:scaleX(1.073);">P</i><i style="width:12px;">&nbsp;</i><i style="width:12px;transform:scaleX(1.038);">0</i><i style="width:12px;transform:scaleX(1.038);">0</i><i style="width:12px;transform:scaleX(1.038);">0</i><i style="width:12px;transform:scaleX(1.038);">0</i><i style="width:12px;transform:scaleX(1.038);">0</i><i style="width:12px;transform:scaleX(1.038);">0</i><i style="width:12px;transform:scaleX(1.038);">0</i><i style="width:12px;">1</i><i style="width:12px;transform:scaleX(1.038);">0</i><i style="width:12px;transform:scaleX(1.038);">0</i><i style="width:12px;transform:scaleX(1.038);">0</i><i style="width:12px;transform:scaleX(0.826);">A</i><i style="width:12px;transform:scaleX(1.038);">6</i><i style="width:12px;transform:scaleX(1.038);">0</i><i style="width:12px;transform:scaleX(1.073);">F</i><i style="width:12px;">1</i></div>
<div class="cl" style="left:1152px;top:88.11px;font:18.5px/18.5px 'Liberation Serif', serif;"><i style="width:12px;transform:scaleX(0.826);">O</i><i style="width:12px;transform:scaleX(1.073);">F</i><i style="width:12px;">&nbsp;</i><i style="width:12px;transform:scaleX(1.038);">0</i></div>
<div class="cl" style="left:1152px;top:112.11px;font:18.5px/18.5px 'Liberation Serif', serif;"><i style="width:12px;transform:scaleX(0.826);">D</i><i style="width:12px;transform:scaleX(1.073);">F</i><i style="width:12px;">&nbsp;</i><i style="width:12px;transform:scaleX(1.038);">0</i></div>
<div class="cl" style="left:1152px;top:136.11px;font:18.5px/18.5px 'Liberation Serif', serif;"><i style="width:12px;transform:scaleX(1.073);">S</i><i style="width:12px;transform:scaleX(1.073);">F</i><i style="width:12px;">&nbsp;</i><i style="width:12px;transform:scaleX(1.038);">0</i></div>
<div class="cl" style="left:1152px;top:160.11px;font:18.5px/18.5px 'Liberation Serif', serif;"><i style="width:12px;transform:scaleX(0.977);">Z</i><i style="width:12px;transform:scaleX(1.073);">F</i><i style="width:12px;">&nbsp;</i><i style="width:12px;">1</i></div>
<div class="cl" style="left:1152px;top:184.11px;font:18.5px/18.5px 'Liberation Serif', serif;"><i style="width:12px;transform:scaleX(0.826);">A</i><i style="width:12px;transform:scaleX(1.073);">F</i><i style="width:12px;">&nbsp;</i><i style="width:12px;transform:scaleX(1.038);">0</i></div>
<div class="cl" style="left:1152px;top:208.11px;font:18.5px/18.5px 'Liberation Serif', serif;"><i style="width:12px;transform:scaleX(1.073);">P</i><i style="width:12px;transform:scaleX(1.073);">F</i><i style="width:12px;">&nbsp;</i><i style="width:12px;">1</i></div>
<div class="cl" style="left:1152px;top:232.11px;font:18.5px/18.5px 'Liberation Serif', serif;"><i style="width:12px;transform:scaleX(0.895);">C</i><i style="width:12px;transform:scaleX(1.073);">F</i><i style="width:12px;">&nbsp;</i><i style="width:12px;transform:scaleX(1.038);">0</i></div>
<div class="cl" style="left:898px;top:499.61px;font:18.5px/18.5px 'Liberation Serif', serif;"><i style="width:12px;transform:scaleX(1.073);">S</i><i style="width:12px;transform:scaleX(1.345);">e</i><i style="width:12px;transform:scaleX(1.194);">g</i><i style="width:12px;transform:scaleX(0.767);">m</i><i style="width:12px;transform:scaleX(1.345);">e</i><i style="width:12px;transform:scaleX(1.194);">n</i><i style="width:12px;">t</i><i style="width:12px;">&nbsp;</i><i style="width:12px;transform:scaleX(0.895);">R</i><i style="width:12px;transform:scaleX(1.345);">e</i><i style="width:12px;transform:scaleX(1.194);">g</i><i style="width:12px;">i</i><i style="width:12px;transform:scaleX(1.534);">s</i><i style="width:12px;">t</i><i style="width:12px;transform:scaleX(1.345);">e</i><i style="width:12px;">r</i><i style="width:12px;transform:scaleX(1.534);">s</i></div>
<div style="position:absolute;left:898px;top:519px;width:204px;height:2px;background:#000;"></div>
<div class="cl" style="left:898px;top:523.11px;font:18.5px/18.5px 'Liberation Serif', serif;"><i style="width:12px;transform:scaleX(0.895);">C</i><i style="width:12px;transform:scaleX(1.073);">S</i><i style="width:12px;">&nbsp;</i><i style="width:12px;transform:scaleX(1.038);">0</i><i style="width:12px;transform:scaleX(1.038);">0</i><i style="width:12px;transform:scaleX(1.038);">3</i><i style="width:12px;transform:scaleX(1.038);">3</i></div>
<div class="cl" style="left:898px;top:547.11px;font:18.5px/18.5px 'Liberation Serif', serif;"><i style="width:12px;transform:scaleX(1.073);">S</i><i style="width:12px;transform:scaleX(1.073);">S</i><i style="width:12px;">&nbsp;</i><i style="width:12px;transform:scaleX(1.038);">0</i><i style="width:12px;transform:scaleX(1.038);">0</i><i style="width:12px;transform:scaleX(1.038);">2</i><i style="width:12px;transform:scaleX(0.895);">B</i></div>
<div style="position:absolute;left:0px;top:601px;width:1205px;height:2px;background:#a0a0a0;"></div>
<div style="position:absolute;left:0px;top:603px;width:1205px;height:3px;background:#f0f0f0;"></div>
<div style="position:absolute;left:0px;top:606px;width:1205px;height:1px;background:#5a5a5a;"></div>
<div style="position:absolute;left:0px;top:607px;width:1205px;height:1px;background:#ffffff;"></div>
<div style="position:absolute;left:0px;top:608px;width:490px;height:224px;background:#f0f0f0;border-left:1px solid #fff;border-top:1px solid #fff;"></div>
<div style="position:absolute;left:1.00px;top:612.24px;font:normal 13px/13px 'Liberation Mono', monospace;color:#000;white-space:pre;letter-spacing:1.2px;">Protect: All</div>
<div style="position:absolute;left:1.00px;top:628.54px;font:normal 13px/13px 'Liberation Mono', monospace;color:#000;white-space:pre;letter-spacing:1.2px;">address  00</div>
<div style="position:absolute;left:1px;top:643px;width:489px;height:1px;background:#000;"></div>
<div style="position:absolute;left:1.00px;top:647.74px;font:normal 13px/13px 'Liberation Mono', monospace;color:#000;white-space:pre;letter-spacing:1.2px;">00AF4000 ?? ?? ?? ?? ?? ?? ?? ?? ????????</div>
<div style="position:absolute;left:1.00px;top:664.62px;font:normal 13px/13px 'Liberation Mono', monospace;color:#000;white-space:pre;letter-spacing:1.2px;">00AF4008 ?? ?? ?? ?? ?? ?? ?? ?? ????????</div>
<div style="position:absolute;left:1.00px;top:681.50px;font:normal 13px/13px 'Liberation Mono', monospace;color:#000;white-space:pre;letter-spacing:1.2px;">00AF4010 ?? ?? ?? ?? ?? ?? ?? ?? ????????</div>
<div style="position:absolute;left:1.00px;top:698.38px;font:normal 13px/13px 'Liberation Mono', monospace;color:#000;white-space:pre;letter-spacing:1.2px;">00AF4018 ?? ?? ?? ?? ?? ?? ?? ?? ????????</div>
<div style="position:absolute;left:1.00px;top:715.26px;font:normal 13px/13px 'Liberation Mono', monospace;color:#000;white-space:pre;letter-spacing:1.2px;">00AF4020 ?? ?? ?? ?? ?? ?? ?? ?? ????????</div>
<div style="position:absolute;left:1.00px;top:732.14px;font:normal 13px/13px 'Liberation Mono', monospace;color:#000;white-space:pre;letter-spacing:1.2px;">00AF4028 ?? ?? ?? ?? ?? ?? ?? ?? ????????</div>
<div style="position:absolute;left:1.00px;top:749.02px;font:normal 13px/13px 'Liberation Mono', monospace;color:#000;white-space:pre;letter-spacing:1.2px;">00AF4030 ?? ?? ?? ?? ?? ?? ?? ?? ????????</div>
<div style="position:absolute;left:1.00px;top:765.90px;font:normal 13px/13px 'Liberation Mono', monospace;color:#000;white-space:pre;letter-spacing:1.2px;">00AF4038 ?? ?? ?? ?? ?? ?? ?? ?? ????????</div>
<div style="position:absolute;left:1.00px;top:782.78px;font:normal 13px/13px 'Liberation Mono', monospace;color:#000;white-space:pre;letter-spacing:1.2px;">00AF4040 ?? ?? ?? ?? ?? ?? ?? ?? ????????</div>
<div style="position:absolute;left:1.00px;top:799.66px;font:normal 13px/13px 'Liberation Mono', monospace;color:#000;white-space:pre;letter-spacing:1.2px;">00AF4048 ?? ?? ?? ?? ?? ?? ?? ?? ????????</div>
<div style="position:absolute;left:1.00px;top:816.54px;font:normal 13px/13px 'Liberation Mono', monospace;color:#000;white-space:pre;letter-spacing:1.2px;">00AF4050 ?? ?? ?? ?? ?? ?? ?? ?? ????????</div>
<div style="position:absolute;left:469px;top:608px;width:1px;height:224px;background:#ffffff;"></div>
<div style="position:absolute;left:470px;top:608px;width:20px;height:224px;background:#f0f0f0;"></div>
<div style="position:absolute;left:471px;top:724px;width:18px;height:21px;background:#cdcdcd;"></div>
<div style="position:absolute;left:490px;top:608px;width:1px;height:224px;background:#a0a0a0;"></div>
<div style="position:absolute;left:491px;top:608px;width:7px;height:224px;background:#f0f0f0;"></div>
<div style="position:absolute;left:497px;top:608px;width:1px;height:224px;background:#a0a0a0;"></div>
<div style="position:absolute;left:494px;top:725px;width:1px;height:1px;background:#9a9a9a;"></div>
<div style="position:absolute;left:494px;top:728px;width:1px;height:1px;background:#9a9a9a;"></div>
<div style="position:absolute;left:494px;top:731px;width:1px;height:1px;background:#9a9a9a;"></div>
<div style="position:absolute;left:494px;top:734px;width:1px;height:1px;background:#9a9a9a;"></div>
<div style="position:absolute;left:494px;top:737px;width:1px;height:1px;background:#9a9a9a;"></div>
<div style="position:absolute;left:494px;top:740px;width:1px;height:1px;background:#9a9a9a;"></div>
<div style="position:absolute;left:494px;top:743px;width:1px;height:1px;background:#9a9a9a;"></div>
<div style="position:absolute;left:494px;top:746px;width:1px;height:1px;background:#9a9a9a;"></div>
<div style="position:absolute;left:494px;top:749px;width:1px;height:1px;background:#9a9a9a;"></div>
<div style="position:absolute;left:494px;top:752px;width:1px;height:1px;background:#9a9a9a;"></div>
<div style="position:absolute;left:494px;top:755px;width:1px;height:1px;background:#9a9a9a;"></div>
<div style="position:absolute;left:494px;top:758px;width:1px;height:1px;background:#9a9a9a;"></div>
<div style="position:absolute;left:494px;top:761px;width:1px;height:1px;background:#9a9a9a;"></div>
<div style="position:absolute;left:498px;top:608px;width:707px;height:2px;background:#8a9098;"></div>
<div style="position:absolute;left:498px;top:610px;width:707px;height:222px;background:#ffffff;"></div>
<div style="position:absolute;left:651.62px;top:641.88px;font:normal 15.5px/15.5px 'Liberation Sans', sans-serif;color:#000;white-space:pre;transform:scaleX(0.8809);transform-origin:0 0;">5CC39</div>
<div style="position:absolute;left:707.30px;top:641.88px;font:normal 15.5px/15.5px 'Liberation Sans', sans-serif;color:#000;white-space:pre;transform:scaleX(0.9236);transform-origin:0 0;">00000000,00000000,00000000,00000000,...</div>
<div style="position:absolute;left:651.54px;top:665.88px;font:normal 15.5px/15.5px 'Liberation Sans', sans-serif;color:#000;white-space:pre;transform:scaleX(0.9591);transform-origin:0 0;">5D339</div>
<div style="position:absolute;left:707.30px;top:665.88px;font:normal 15.5px/15.5px 'Liberation Sans', sans-serif;color:#000;white-space:pre;transform:scaleX(0.9236);transform-origin:0 0;">00000000,00000000,00000000,00000000,...</div>
<div style="position:absolute;left:651.62px;top:689.88px;font:normal 15.5px/15.5px 'Liberation Sans', sans-serif;color:#000;white-space:pre;transform:scaleX(0.8826);transform-origin:0 0;">5CB32</div>
<div style="position:absolute;left:707.30px;top:689.88px;font:normal 15.5px/15.5px 'Liberation Sans', sans-serif;color:#000;white-space:pre;transform:scaleX(0.8694);transform-origin:0 0;">00104BA0,013FEFE8,013FEF60,0000DB1C,...</div>
<div style="position:absolute;left:506.20px;top:713.88px;font:normal 15.5px/15.5px 'Liberation Sans', sans-serif;color:#000;white-space:pre;transform:scaleX(0.9344);transform-origin:0 0;">Tutorial-x86_64.exe+DAE1</div>
<div style="position:absolute;left:707.30px;top:713.88px;font:normal 15.5px/15.5px 'Liberation Sans', sans-serif;color:#000;white-space:pre;transform:scaleX(0.8886);transform-origin:0 0;">00104BA0,013FEFE8,0000BD11,00000000,...</div>
<div style="position:absolute;left:506.20px;top:737.88px;font:normal 15.5px/15.5px 'Liberation Sans', sans-serif;color:#000;white-space:pre;transform:scaleX(0.9273);transform-origin:0 0;">Tutorial-x86_64.exe+A4EC1</div>
<div style="position:absolute;left:707.30px;top:737.88px;font:normal 15.5px/15.5px 'Liberation Sans', sans-serif;color:#000;white-space:pre;transform:scaleX(0.8936);transform-origin:0 0;">00000111,02B5006A,013FF030,F511C7B8,...</div>
<div style="position:absolute;left:506.20px;top:761.88px;font:normal 15.5px/15.5px 'Liberation Sans', sans-serif;color:#000;white-space:pre;transform:scaleX(0.9426);transform-origin:0 0;">Tutorial-x86_64.exe+99559</div>
<div style="position:absolute;left:707.30px;top:761.88px;font:normal 15.5px/15.5px 'Liberation Sans', sans-serif;color:#000;white-space:pre;transform:scaleX(0.9095);transform-origin:0 0;">00000001,00000000,0491DB60,0000D45D,...</div>
<div style="position:absolute;left:506.20px;top:785.88px;font:normal 15.5px/15.5px 'Liberation Sans', sans-serif;color:#000;white-space:pre;transform:scaleX(0.9417);transform-origin:0 0;">Tutorial-x86_64.exe+19BDD9</div>
<div style="position:absolute;left:707.30px;top:785.88px;font:normal 15.5px/15.5px 'Liberation Sans', sans-serif;color:#000;white-space:pre;transform:scaleX(0.9057);transform-origin:0 0;">00000220,0000BD11,00004BA0,0010095C,...</div>
<div style="position:absolute;left:506.20px;top:809.88px;font:normal 15.5px/15.5px 'Liberation Sans', sans-serif;color:#000;white-space:pre;transform:scaleX(0.9322);transform-origin:0 0;">Tutorial-x86_64.exe+13E829</div>
<div style="position:absolute;left:707.30px;top:809.88px;font:normal 15.5px/15.5px 'Liberation Sans', sans-serif;color:#000;white-space:pre;transform:scaleX(0.8971);transform-origin:0 0;">00000000,00000000,013FF0B0,000105D2,...</div>
<div style="position:absolute;left:105px;top:368px;width:546px;height:355px;background:#fff;border:1px solid #8a8a8a;box-shadow:0 0 12px rgba(0,0,0,0.28);"></div>
<svg style="position:absolute;left:115.9px;top:377.7px" width="18" height="19" viewBox="0 0 18 19">
<g fill="#000">
<rect x="4.8" y="0.2" width="2.4" height="2.6" rx="0.8"/><rect x="9.6" y="0" width="2.4" height="2.6" rx="0.8"/><rect x="14.4" y="0.2" width="2.6" height="2.6" rx="0.8"/>
<rect x="4.8" y="16.4" width="2.4" height="2.6" rx="0.8"/><rect x="10" y="16.4" width="2.4" height="2.6" rx="0.8"/><rect x="15" y="16.2" width="3" height="2.8" rx="0.8"/>
<rect x="0.2" y="4" width="2.6" height="2.4" rx="0.8"/><rect x="0" y="8.4" width="2.6" height="2.2" rx="0.8"/><rect x="0.2" y="13" width="2.6" height="2.4" rx="0.8"/>
</g>
<path d="M16.8 2.4 H7.4 Q2.4 2.4 2.4 7.4 V11.8 Q2.4 16.6 7.4 16.6 H17 V13.2 H8.8 Q6 13.2 6 10.4 V8.6 Q6 5.8 8.8 5.8 H16.8 Z" fill="#135f94" stroke="#000" stroke-width="1.1" stroke-linejoin="round"/>
<rect x="1" y="8.6" width="12.4" height="1.9" fill="#000"/>
</svg>
<div style="position:absolute;left:140.60px;top:379.80px;font:normal 15px/15px 'Liberation Sans', sans-serif;color:#999999;white-space:pre;transform:scaleX(0.9808);transform-origin:0 0;">Auto assemble</div>
<div style="position:absolute;left:497px;top:386px;width:12px;height:1px;background:#888;"></div>
<div style="position:absolute;left:555px;top:381px;width:12px;height:12px;background:transparent;border:1px solid #888;"></div>
<svg style="position:absolute;left:613px;top:380px" width="14" height="14"><path d="M1 1 L13 13 M13 1 L1 13" stroke="#888" stroke-width="1.1"/></svg>
<div style="position:absolute;left:113.53px;top:410.80px;font:normal 15px/15px 'Liberation Sans', sans-serif;color:#000;white-space:pre;transform:scaleX(0.9739);transform-origin:0 0;">File</div>
<div style="position:absolute;left:153.30px;top:410.80px;font:normal 15px/15px 'Liberation Sans', sans-serif;color:#000;white-space:pre;transform:scaleX(0.9515);transform-origin:0 0;">View</div>
<div style="position:absolute;left:201.90px;top:410.80px;font:normal 15px/15px 'Liberation Sans', sans-serif;color:#000;white-space:pre;transform:scaleX(0.9918);transform-origin:0 0;">Template</div>
<div style="position:absolute;left:107px;top:431px;width:542px;height:1px;background:#a0a0a0;"></div>
<div style="position:absolute;left:107px;top:432px;width:542px;height:234px;background:#ffffff;"></div>
<div style="position:absolute;left:108px;top:432px;width:26px;height:233px;background:#f0f0f0;"></div>
<div style="position:absolute;left:129px;top:433px;width:5px;height:180px;background:#ffee00;"></div>
<div style="position:absolute;left:137px;top:432px;width:15px;height:233px;background:#f0f0f0;"></div>
<div style="position:absolute;left:628px;top:432px;width:20px;height:234px;background:#f0f0f0;"></div>
<svg style="position:absolute;left:628px;top:432px" width="20" height="234"><path d="M5.5 14.5 L10 10 L14.5 14.5" stroke="#b0b0b0" stroke-width="1.6" fill="none"/><path d="M5.5 219.5 L10 224 L14.5 219.5" stroke="#b0b0b0" stroke-width="1.6" fill="none"/></svg>
<div style="position:absolute;left:107px;top:665px;width:521px;height:21px;background:#f0f0f0;"></div>
<svg style="position:absolute;left:107px;top:665px" width="521" height="21"><path d="M14 6 L8.5 10.5 L14 15" stroke="#b0b0b0" stroke-width="1.6" fill="none"/><path d="M505 6 L510.5 10.5 L505 15" stroke="#b0b0b0" stroke-width="1.6" fill="none"/></svg>
<div style="position:absolute;left:628px;top:665px;width:20px;height:21px;background:#f0f0f0;"></div>
<div style="position:absolute;left:107px;top:687px;width:542px;height:1px;background:#a0a0a0;"></div>
<div style="position:absolute;left:107px;top:688px;width:542px;height:33px;background:#f0f0f0;"></div>
<div style="position:absolute;left:332px;top:691px;width:93px;height:28px;background:#e1e1e1;border:1px solid #adadad;"></div>
<div style="position:absolute;left:352.35px;top:697.80px;font:normal 15px/15px 'Liberation Sans', sans-serif;color:#000;white-space:pre;transform:scaleX(0.9528);transform-origin:0 0;">Execute</div>
<div style="position:absolute;right:1078.5px;top:434.90px;font:normal 15px/15px 'Liberation Sans', sans-serif;color:#000;white-space:pre;">1</div>
<div style="position:absolute;left:153.50px;top:436.34px;font:normal 16px/16px 'Liberation Mono', monospace;color:#000;white-space:pre;letter-spacing:0.4px;"><span style="color:#008000;font-weight:normal">014D0000</span><span style="color:#000;font-weight:normal">:</span></div>
<div style="position:absolute;right:1078.5px;top:454.90px;font:normal 15px/15px 'Liberation Sans', sans-serif;color:#000;white-space:pre;">2</div>
<div style="position:absolute;left:153.50px;top:456.34px;font:normal 16px/16px 'Liberation Mono', monospace;color:#000;white-space:pre;letter-spacing:0.4px;"><span style="color:#000;font-weight:bold">mov </span><span style="color:#ff8000;font-weight:bold">rcx</span><span style="color:#000;font-weight:normal">,</span><span style="color:#008000;font-weight:normal">00000000000DED40</span></div>
<div style="position:absolute;right:1078.5px;top:474.90px;font:normal 15px/15px 'Liberation Sans', sans-serif;color:#000;white-space:pre;">3</div>
<div style="position:absolute;left:153.50px;top:476.34px;font:normal 16px/16px 'Liberation Mono', monospace;color:#000;white-space:pre;letter-spacing:0.4px;"><span style="color:#000;font-weight:bold">mov </span><span style="color:#ff8000;font-weight:bold">rdx</span><span style="color:#000;font-weight:normal">,</span><span style="color:#008000;font-weight:normal">0000000000104BA0</span></div>
<div style="position:absolute;right:1078.5px;top:494.90px;font:normal 15px/15px 'Liberation Sans', sans-serif;color:#000;white-space:pre;">4</div>
<div style="position:absolute;left:153.50px;top:496.34px;font:normal 16px/16px 'Liberation Mono', monospace;color:#000;white-space:pre;letter-spacing:0.4px;"><span style="color:#000;font-weight:bold">mov </span><span style="color:#ff8000;font-weight:bold">r8</span><span style="color:#000;font-weight:normal">,</span><span style="color:#008000;font-weight:normal">000000000010095C</span></div>
<div style="position:absolute;right:1078.5px;top:514.90px;font:normal 15px/15px 'Liberation Sans', sans-serif;color:#000;white-space:pre;">5</div>
<div style="position:absolute;left:153.50px;top:516.34px;font:normal 16px/16px 'Liberation Mono', monospace;color:#000;white-space:pre;letter-spacing:0.4px;"><span style="color:#000;font-weight:bold">mov </span><span style="color:#ff8000;font-weight:bold">r9</span><span style="color:#000;font-weight:normal">,</span><span style="color:#008000;font-weight:normal">000000000010095C</span></div>
<div style="position:absolute;right:1078.5px;top:534.90px;font:normal 15px/15px 'Liberation Sans', sans-serif;color:#000;white-space:pre;">6</div>
<div style="position:absolute;left:153.50px;top:536.34px;font:normal 16px/16px 'Liberation Mono', monospace;color:#000;white-space:pre;letter-spacing:0.4px;"><span style="color:#000;font-weight:bold">mov </span><span style="color:#ff8000;font-weight:bold">rax</span><span style="color:#000;font-weight:normal">,</span><span style="color:#008000;font-weight:normal">0000000000104BA0</span></div>
<div style="position:absolute;right:1078.5px;top:554.90px;font:normal 15px/15px 'Liberation Sans', sans-serif;color:#000;white-space:pre;">7</div>
<div style="position:absolute;left:153.50px;top:556.34px;font:normal 16px/16px 'Liberation Mono', monospace;color:#000;white-space:pre;letter-spacing:0.4px;"><span style="color:#000;font-weight:bold">call </span><span style="color:#333;font-weight:normal">qword ptr </span><span style="color:#ff8000;font-weight:normal">[</span><span style="color:#ff8000;font-weight:bold">rax</span><span style="color:#008000;font-weight:normal">+</span><span style="color:#008000;font-weight:normal">000001F0</span><span style="color:#333;font-weight:normal">]</span></div>
<div style="position:absolute;right:1078.5px;top:574.90px;font:normal 15px/15px 'Liberation Sans', sans-serif;color:#000;white-space:pre;">8</div>
<div style="position:absolute;left:153.50px;top:576.34px;font:normal 16px/16px 'Liberation Mono', monospace;color:#000;white-space:pre;letter-spacing:0.4px;"><span style="color:#000;font-weight:bold">ret</span></div>
<div style="position:absolute;right:1078.5px;top:594.90px;font:normal 15px/15px 'Liberation Sans', sans-serif;color:#000;white-space:pre;">9</div>
<div style="position:absolute;left:696px;top:558px;width:454px;height:141px;background:#fff;border:1px solid #7a7a7a;box-shadow:0 0 12px rgba(0,0,0,0.28);"></div>
<div style="position:absolute;left:699.55px;top:567.10px;font:normal 15px/15px 'Liberation Sans', sans-serif;color:#000;white-space:pre;transform:scaleX(0.9504);transform-origin:0 0;">Cheat Engine 7.2</div>
<svg style="position:absolute;left:1121px;top:567px" width="14" height="14"><path d="M1 1 L13 13 M13 1 L1 13" stroke="#000" stroke-width="1.1"/></svg>
<div style="position:absolute;left:710.90px;top:612.20px;font:normal 15px/15px 'Liberation Sans', sans-serif;color:#000;white-space:pre;transform:scaleX(0.9721);transform-origin:0 0;">The code injection was successfull</div>
<div style="position:absolute;left:697px;top:648px;width:452px;height:50px;background:#f0f0f0;border-top:1px solid #dfdfdf;"></div>
<div style="position:absolute;left:1050px;top:660px;width:85px;height:27px;background:#e1e1e1;border:2px solid #0078d7;"></div>
<div style="position:absolute;left:1082.00px;top:666.50px;font:normal 15px/15px 'Liberation Sans', sans-serif;color:#000;white-space:pre;transform:scaleX(0.9136);transform-origin:0 0;">OK</div>
</body></html>
